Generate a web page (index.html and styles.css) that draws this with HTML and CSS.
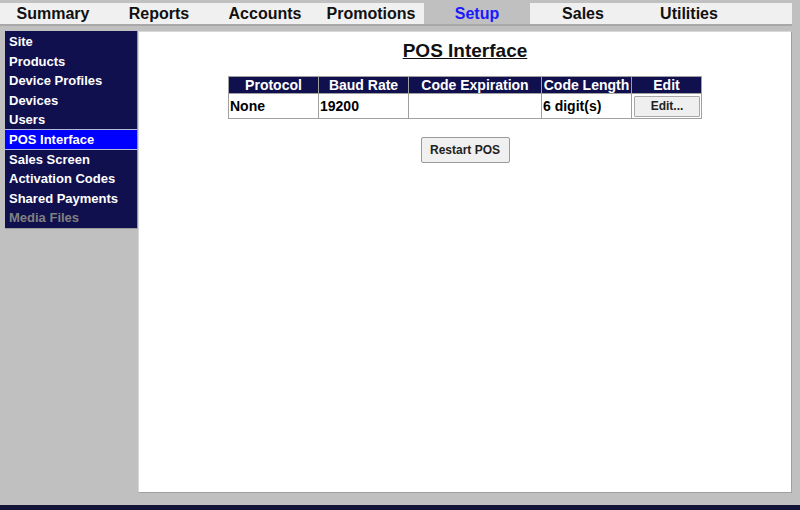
FILE: index.html
```html
<!DOCTYPE html>
<html>
<head>
<meta charset="utf-8">
<link rel="stylesheet" href="styles.css">
</head>
<body>
<div class="tabs">
  <div class="tab">Summary</div>
  <div class="tab">Reports</div>
  <div class="tab">Accounts</div>
  <div class="tab">Promotions</div>
  <div class="tab active">Setup</div>
  <div class="tab">Sales</div>
  <div class="tab">Utilities</div>
  <div class="tab-fill"></div>
</div>
<div class="layout">
  <div class="sidebar">
    <div class="item">Site</div>
    <div class="item">Products</div>
    <div class="item">Device Profiles</div>
    <div class="item">Devices</div>
    <div class="item">Users</div>
    <div class="item selected">POS Interface</div>
    <div class="item">Sales Screen</div>
    <div class="item">Activation Codes</div>
    <div class="item">Shared Payments</div>
    <div class="item disabled">Media Files</div>
  </div>
  <div class="main">
    <h1 class="title">POS Interface</h1>
    <table class="grid">
      <thead>
        <tr>
          <th class="c1">Protocol</th>
          <th class="c2">Baud Rate</th>
          <th class="c3">Code Expiration</th>
          <th class="c4">Code Length</th>
          <th class="c5">Edit</th>
        </tr>
      </thead>
      <tbody>
        <tr>
          <td>None</td>
          <td>19200</td>
          <td></td>
          <td>6 digit(s)</td>
          <td class="btn-cell"><button class="edit-btn">Edit...</button></td>
        </tr>
      </tbody>
    </table>
    <div class="actions"><button class="restart">Restart POS</button></div>
  </div>
</div>
<div class="bottom-bar"></div>
</body>
</html>
```
FILE: styles.css
```css
html, body {
  margin: 0;
  padding: 0;
}
body {
  background: #c0c0c0;
  font-family: "Liberation Sans", Arial, sans-serif;
  width: 800px;
  height: 510px;
  overflow: hidden;
  display: flex;
  flex-direction: column;
}
.tabs {
  margin-top: 3px;
  width: 792px;
  height: 21px;
  display: flex;
  background: #f0f0f0;
  border-bottom: 2px solid #a8a8a8;
}
.tab {
  width: 106px;
  text-align: center;
  font-size: 16px;
  font-weight: bold;
  line-height: 21px;
  color: #111;
}
.tab.active {
  background: #c0c0c0;
  color: #1a1aff;
}
.tab-fill {
  flex: 1;
}
.layout {
  display: flex;
  align-items: flex-start;
  padding: 5px 0 0 5px;
  height: 462px;
}
.sidebar {
  width: 132px;
  background: #10104e;
  border-right: 1px solid #9a9a9a;
  border-bottom: 1px solid #9a9a9a;
  padding-top: 1px;
}
.item {
  height: 19.6px;
  line-height: 19.6px;
  padding-left: 4px;
  font-size: 13px;
  font-weight: bold;
  color: #ffffff;
  box-sizing: border-box;
}
.item.selected {
  background: #0000ff;
  border-top: 1px solid #b8b8d8;
  border-bottom: 1px solid #b8b8d8;
  height: 21px;
  line-height: 19px;
  margin: -1px 0 -0.4px;
}
.item.disabled {
  color: #808080;
}
.main {
  width: 652px;
  height: 460px;
  background: #ffffff;
  border: 1px solid #a0a0a0;
  border-top-color: #d8d8d8;
  border-left-color: #d8d8d8;
}
.title {
  margin: 8px 0 0;
  text-align: center;
  font-size: 19px;
  line-height: 22px;
  font-weight: bold;
  text-decoration: underline;
  color: #111;
}
.grid {
  margin: 14px auto 0;
  border-collapse: collapse;
  font-size: 14px;
  font-weight: bold;
}
.grid th {
  background: #10104e;
  color: #ffffff;
  height: 16px;
  padding: 0;
  line-height: 16px;
  border: 1px solid #a0a0a0;
  text-align: center;
}
.grid td {
  height: 22px;
  padding: 0 0 0 1px;
  border: 1px solid #a0a0a0;
  color: #000;
  text-align: left;
}
.c1 { width: 89px; }
.c2 { width: 89px; }
.c3 { width: 132px; }
.c4 { width: 89px; }
.c5 { width: 68px; }
.grid td.btn-cell {
  padding: 1px 1px 1px 2px;
}
.edit-btn {
  display: block;
  width: 66px;
  height: 21px;
  padding: 0;
  background: #efefef;
  border: 1px solid #a8a8a8;
  border-radius: 1px;
  font-family: "Liberation Sans", Arial, sans-serif;
  font-size: 12px;
  font-weight: bold;
  color: #222;
}
.actions {
  margin-top: 18px;
  text-align: center;
}
.restart {
  width: 89px;
  height: 26px;
  padding: 0;
  background: #f0f0f0;
  border: 1px solid #9a9a9a;
  border-radius: 2px;
  font-family: "Liberation Sans", Arial, sans-serif;
  font-size: 12px;
  font-weight: bold;
  color: #222;
}
.bottom-bar {
  margin-top: 12px;
  height: 5px;
  background: #141438;
}
```
